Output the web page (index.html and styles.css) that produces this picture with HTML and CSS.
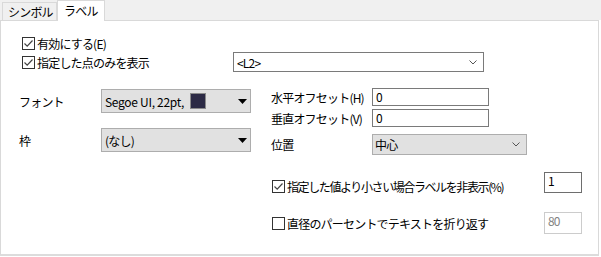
FILE: index.html
```html
<!DOCTYPE html>
<html lang="ja">
<head>
    <meta charset="UTF-8">
    <meta name="viewport" content="width=device-width, initial-scale=1.0">
    <title>ラベル</title>
    <link rel="stylesheet" href="styles.css">
</head>
<body>
    <!-- タブ -->
    <div class="tabs">
        <div class="tab">シンボル</div>
        <div class="tab active">ラベル</div>
    </div>

    <div class="panel">
        <div class="row row-enable">
            <label class="check">
                <span class="box"><svg viewBox="0 0 11 11" width="11" height="11"><path d="M1.5 5.5 L4.2 8.2 L9.5 2.5" fill="none" stroke="#444" stroke-width="1.2"/></svg></span>
                有効にする(E)
            </label>
        </div>
        <div class="row row-points">
            <label class="check check-fixed">
                <span class="box"><svg viewBox="0 0 11 11" width="11" height="11"><path d="M1.5 5.5 L4.2 8.2 L9.5 2.5" fill="none" stroke="#444" stroke-width="1.2"/></svg></span>
                指定した点のみを表示
            </label>
            <div class="select select-white">
                <span class="value">&lt;L2&gt;</span>
                <svg class="chev" viewBox="0 0 8 5" width="8" height="5"><path d="M0.5 0.5 L4 4 L7.5 0.5" fill="none" stroke="#555" stroke-width="1"/></svg>
            </div>
        </div>

        <div class="lower">
            <!-- 左列 -->
            <div class="col col-left">
                <div class="field field-font">
                    <span class="lbl">フォント</span>
                    <div class="combo">
                        <span class="value latin">Segoe UI, 22pt,</span>
                        <span class="swatch"></span>
                        <svg class="tri" viewBox="0 0 9 5" width="9" height="5"><polygon points="0,0 9,0 4.5,5" fill="#000"/></svg>
                    </div>
                </div>
                <div class="field field-frame">
                    <span class="lbl">枠</span>
                    <div class="combo">
                        <span class="value">(なし)</span>
                        <svg class="tri" viewBox="0 0 9 5" width="9" height="5"><polygon points="0,0 9,0 4.5,5" fill="#000"/></svg>
                    </div>
                </div>
            </div>

            <!-- 右列 -->
            <div class="col col-right">
                <div class="field field-h">
                    <span class="lbl lbl-wide">水平オフセット(H)</span>
                    <div class="input">0</div>
                </div>
                <div class="field field-v">
                    <span class="lbl lbl-wide">垂直オフセット(V)</span>
                    <div class="input">0</div>
                </div>
                <div class="field field-pos">
                    <span class="lbl lbl-wide">位置</span>
                    <div class="select select-gray">
                        <span class="value">中心</span>
                        <svg class="chev" viewBox="0 0 8 5" width="8" height="5"><path d="M0.5 0.5 L4 4 L7.5 0.5" fill="none" stroke="#555" stroke-width="1"/></svg>
                    </div>
                </div>
                <div class="field field-hide">
                    <label class="check tight">
                        <span class="box"><svg viewBox="0 0 11 11" width="11" height="11"><path d="M1.5 5.5 L4.2 8.2 L9.5 2.5" fill="none" stroke="#444" stroke-width="1.2"/></svg></span>
                        指定した値より小さい場合ラベルを非表示(%)
                    </label>
                    <div class="input small">1</div>
                </div>
                <div class="field field-wrap">
                    <label class="check">
                        <span class="box"></span>
                        直径のパーセントでテキストを折り返す
                    </label>
                    <div class="input small disabled">80</div>
                </div>
            </div>
        </div>
    </div>
</body>
</html>
```

FILE: styles.css
```css
body {
    margin: 0;
    width: 601px;
    height: 257px;
    background: #fff;
    font-family: "Noto Sans CJK JP", "Liberation Sans", sans-serif;
    font-size: 12px;
    letter-spacing: -0.8px;
    color: #000;
}

/* タブ */
.tabs {
    display: flex;
    align-items: flex-end;
    height: 20px;
    background: #f0f0f0;
    padding-left: 2px;
    width: 599px;
}

.tab {
    height: 18px;
    line-height: 17px;
    padding: 0 0 0 5px;
    border: 1px solid #d9d9d9;
    border-bottom: none;
    background: #f0f0f0;
    box-sizing: border-box;
    width: 55px;
    white-space: nowrap;
    overflow: hidden;
}

.tab.active {
    height: 21px;
    width: 48px;
    background: #fff;
    margin-bottom: -1px;
    line-height: 20px;
    padding-left: 6px;
    position: relative;
}

.panel {
    width: 599px;
    height: 236px;
    box-sizing: border-box;
    border: 1px solid #d9d9d9;
    border-bottom: 2px solid #dcdcdc;
    background: #fff;
    padding-top: 14px;
}

.row {
    display: flex;
    align-items: center;
    padding-left: 21px;
}

.row-enable {
    height: 17px;
}

.row-points {
    height: 20px;
}

/* チェックボックス */
.check {
    display: flex;
    align-items: center;
    gap: 2px;
    white-space: nowrap;
}

.check.tight {
    letter-spacing: -1.4px;
}

.check-fixed {
    width: 211px;
}

.box {
    width: 13px;
    height: 13px;
    box-sizing: border-box;
    border: 1px solid #333;
    background: #fff;
    display: flex;
    align-items: center;
    justify-content: center;
    flex: none;
}

.box svg {
    display: block;
}

/* ドロップダウン */
.select {
    display: flex;
    align-items: center;
    justify-content: space-between;
    box-sizing: border-box;
    padding: 0 6px 0 3px;
}

.select-white {
    width: 251px;
    height: 20px;
    border: 1px solid #7a7a7a;
    background: #fff;
}

.select-gray {
    width: 155px;
    height: 21px;
    border: 1px solid #adadad;
    background: #e1e1e1;
    padding-left: 2px;
}

.chev {
    display: block;
}

.lower {
    display: flex;
}

.col {
    display: flex;
    flex-direction: column;
}

.col-left {
    width: 232px;
    margin-left: 18px;
}

.col-right {
    margin-left: 20px;
    width: 311px;
}

.field {
    display: flex;
    align-items: center;
}

.lbl {
    width: 82px;
    flex: none;
}

.lbl-wide {
    width: 101px;
}

.combo {
    width: 150px;
    height: 24px;
    box-sizing: border-box;
    border: 1px solid #adadad;
    background: #e1e1e1;
    display: flex;
    align-items: center;
    padding: 0 3px 0 3px;
}

.combo .latin {
    letter-spacing: -0.3px;
}

.combo .tri {
    margin-left: auto;
    display: block;
}

.swatch {
    width: 16px;
    height: 16px;
    box-sizing: border-box;
    border: 1px solid #8a8a8a;
    background: #2c2a45;
    margin-left: 6px;
}

.field-font {
    margin-top: 17px;
}

.field-frame {
    margin-top: 15px;
}

/* 入力欄 */
.input {
    width: 117px;
    height: 18px;
    box-sizing: border-box;
    border: 1px solid #7a7a7a;
    background: #fff;
    padding-left: 3px;
    line-height: 15px;
}

.input.small {
    width: 38px;
    height: 21px;
    margin-left: auto;
    border-color: #6e6e6e;
    line-height: 16px;
}

.input.small.disabled {
    height: 22px;
    border-color: #cccccc;
    color: #838383;
}

.field-h {
    margin-top: 16px;
}

.field-v {
    margin-top: 3px;
}

.field-pos {
    margin-top: 7px;
}

.field-hide {
    margin-top: 17px;
    align-items: flex-start;
}

.field-hide .check {
    margin-top: 6px;
}

.field-wrap {
    margin-top: 17px;
}

.col-right .check {
    padding-left: 1px;
}
```
